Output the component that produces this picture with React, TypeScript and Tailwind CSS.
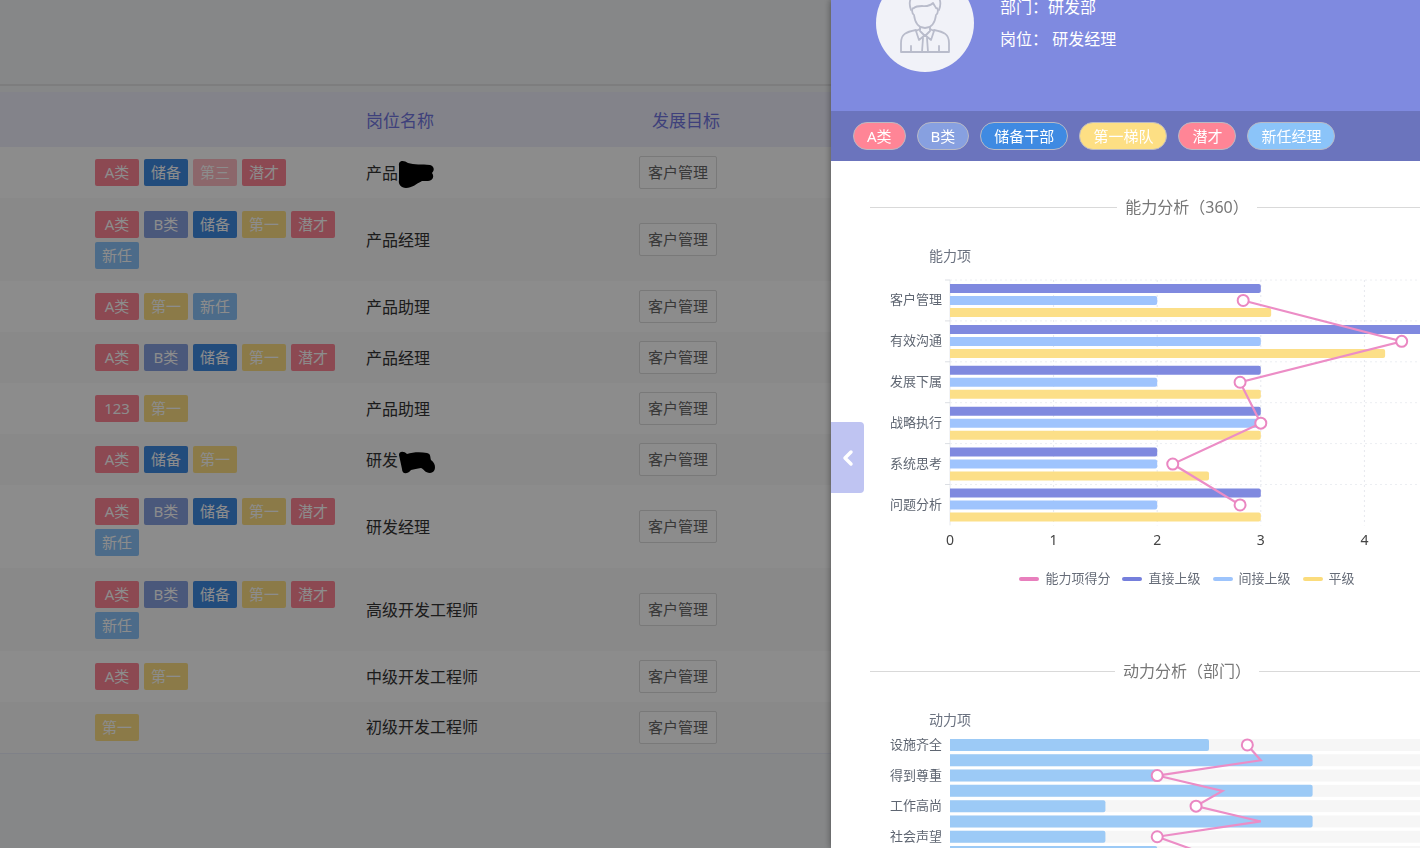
import { ChevronLeft } from 'lucide-react';
import clsx from 'clsx';

type Tone = 'rose' | 'indigo' | 'blue' | 'pale' | 'yellow' | 'sky';

interface Tag {
  text: string;
  tone: Tone;
}

const tones: Record<Tone, string> = {
  rose: 'bg-[#ff8596]',
  indigo: 'bg-[#87a0e0]',
  blue: 'bg-[#3f8ae2]',
  pale: 'bg-[#ffbcc3]',
  yellow: 'bg-[#fddf84]',
  sky: 'bg-[#8bc4f9]',
};

const A: Tag = { text: 'A类', tone: 'rose' };
const B: Tag = { text: 'B类', tone: 'indigo' };
const RESERVE: Tag = { text: '储备', tone: 'blue' };
const FIRST: Tag = { text: '第一', tone: 'yellow' };
const THIRD: Tag = { text: '第三', tone: 'pale' };
const TALENT: Tag = { text: '潜才', tone: 'rose' };
const NEW: Tag = { text: '新任', tone: 'sky' };
const ALL = [A, B, RESERVE, FIRST, TALENT, NEW];

interface Row {
  tags: Tag[];
  post: string;
  mask?: string;
}

const rows: Row[] = [
  {
    tags: [A, RESERVE, THIRD, TALENT],
    post: '产品',
    mask: 'M1 8C0 2 6 2 10 5C16 7 24 6 32 7C36 8 37 12 34 15C37 19 34 23 30 23H24C18 26 14 30 8 30C3 30 0 26 1 22Z',
  },
  { tags: ALL, post: '产品经理' },
  { tags: [A, FIRST, NEW], post: '产品助理' },
  { tags: [A, B, RESERVE, FIRST, TALENT], post: '产品经理' },
  { tags: [{ text: '123', tone: 'rose' }, FIRST], post: '产品助理' },
  {
    tags: [A, RESERVE, FIRST],
    post: '研发',
    mask: 'M1 10C1 6 6 6 9 9C15 7 23 7 29 8C33 9 32 12 33 15C39 19 38 28 32 28C27 28 26 24 23 23C19 24 16 24 13 25C9 30 4 29 4 24Z',
  },
  { tags: ALL, post: '研发经理' },
  { tags: ALL, post: '高级开发工程师' },
  { tags: [A, FIRST], post: '中级开发工程师' },
  { tags: [FIRST], post: '初级开发工程师' },
];

const profileTags: Tag[] = [
  A,
  B,
  { text: '储备干部', tone: 'blue' },
  { text: '第一梯队', tone: 'yellow' },
  TALENT,
  { text: '新任经理', tone: 'sky' },
];

const ability = [
  { name: '客户管理', direct: 3, indirect: 2, peer: 3.1, score: 2.83 },
  { name: '有效沟通', direct: 5, indirect: 3, peer: 4.2, score: 4.36 },
  { name: '发展下属', direct: 3, indirect: 2, peer: 3, score: 2.8 },
  { name: '战略执行', direct: 3, indirect: 3, peer: 3, score: 3 },
  { name: '系统思考', direct: 2, indirect: 2, peer: 2.5, score: 2.15 },
  { name: '问题分析', direct: 3, indirect: 2, peer: 3, score: 2.8 },
];

// Only every second category is labelled on the axis
const drive = [
  { name: '设施齐全', value: 2.5, score: 2.87 },
  { name: '', value: 3.5, score: 3 },
  { name: '得到尊重', value: 2, score: 2 },
  { name: '', value: 3.5, score: 2.63 },
  { name: '工作高尚', value: 1.5, score: 2.375 },
  { name: '', value: 3.5, score: 3 },
  { name: '社会声望', value: 1.5, score: 2 },
  { name: '', value: 2, score: 2.41 },
];

const legend = [
  { name: '能力项得分', color: 'bg-[#e87fbd]' },
  { name: '直接上级', color: 'bg-[#757fdc]' },
  { name: '间接上级', color: 'bg-[#9dc4fc]' },
  { name: '平级', color: 'bg-[#fbdc7c]' },
];

const ORIGIN = 80;
const UNIT = 103.6;
const x = (v: number) => ORIGIN + v * UNIT;

// Bar with a square left end and rounded right corners
const bar = (top: number, v: number, h: number) =>
  `M${ORIGIN} ${top}H${x(v) - 2}q2 0 2 2v${h - 4}q0 2 -2 2H${ORIGIN}Z`;

function SectionTitle({ children }: { children: string }) {
  return (
    <div className="flex h-6 items-center gap-2">
      <span className="h-px flex-1 bg-[#d9d9d9]" />
      <h2 className="text-base leading-6 text-[#777]">{children}</h2>
      <span className="h-px flex-1 bg-[#d9d9d9]" />
    </div>
  );
}

function AbilityChart() {
  const top = 61;
  const band = 40.9;
  const mid = (i: number) => top + band * (i + 0.5);

  return (
    <svg viewBox="0 0 634 348" className="block h-[348px] w-full" role="img" aria-label="能力分析">
      <text x={ORIGIN} y="42" textAnchor="middle" className="fill-[#6b7280] text-sm">能力项</text>
      {[0, 1, 2, 3, 4].map((v) => (
        <g key={v}>
          <line x1={x(v)} x2={x(v)} y1={top} y2={top + band * 6} stroke="#e6e8ee" strokeDasharray={v ? '2 3' : undefined} />
          <text x={x(v)} y="326" textAnchor="middle" className="fill-[#444] text-sm">{v}</text>
        </g>
      ))}
      {ability.map((d, i) => {
        const y = top + band * i;
        return (
          <g key={d.name}>
            <line x1={ORIGIN} x2={x(5)} y1={y} y2={y} stroke="#eceef2" strokeDasharray="2 3" />
            <line x1={ORIGIN - 5} x2={ORIGIN} y1={y} y2={y} stroke="#dcdfe4" />
            <text x="72" y={mid(i) + 4} textAnchor="end" className="fill-[#5f6672] text-[13px]">{d.name}</text>
            <path d={bar(y + 4, d.direct, 9)} fill="#7f89df" />
            <path d={bar(y + 16, d.indirect, 9)} fill="#9fc4fd" />
            <path d={bar(y + 28, d.peer, 9)} fill="#fcdf88" />
          </g>
        );
      })}
      <polyline
        points={ability.map((d, i) => `${x(d.score)},${mid(i)}`).join(' ')}
        fill="none"
        stroke="#ec8dc6"
        strokeWidth="2.2"
      />
      {ability.map((d, i) => (
        <circle key={d.name} cx={x(d.score)} cy={mid(i)} r="5.5" fill="#fff" stroke="#ea87c2" strokeWidth="2" />
      ))}
    </svg>
  );
}

function DriveChart() {
  const top = 54.3;
  const band = 15.3;
  const mid = (i: number) => top + band * (i + 0.5);

  return (
    <svg viewBox="0 0 634 200" className="block h-[200px] w-full" role="img" aria-label="动力分析">
      <text x={ORIGIN} y="42" textAnchor="middle" className="fill-[#6b7280] text-sm">动力项</text>
      {drive.map((d, i) => (
        <g key={i}>
          <rect x={ORIGIN} y={mid(i) - 6} width={UNIT * 5} height="12" fill="#f6f6f6" />
          <path d={bar(mid(i) - 6, d.value, 12)} fill="#9ccaf6" />
          <text x="72" y={mid(i) + 4} textAnchor="end" className="fill-[#5f6672] text-[13px]">{d.name}</text>
        </g>
      ))}
      <polyline
        points={drive.map((d, i) => `${x(d.score)},${mid(i)}`).join(' ')}
        fill="none"
        stroke="#ec8dc6"
        strokeWidth="2.2"
      />
      {drive.map((d, i) =>
        d.name ? (
          <circle key={i} cx={x(d.score)} cy={mid(i)} r="5.5" fill="#fff" stroke="#ea87c2" strokeWidth="2" />
        ) : null
      )}
    </svg>
  );
}

function Avatar() {
  return (
    <div className="flex size-[98px] shrink-0 items-end justify-center rounded-full bg-[#f1f2f8] pb-[19px]">
      <svg width="50" height="62" viewBox="0 0 50 62" fill="none" stroke="#b9bccb" strokeWidth="1.8" strokeLinejoin="round" strokeLinecap="round">
        <path d="M11 19C7 8 13 1 24 1c4-1 6 1 8 2 8 1 10 8 7 16" />
        <path d="M14 17c-3 0-2 6 0 7 1 8 5 13 11 13s10-5 11-13c2-1 3-7 0-7-1-2-2-3-3-5-4 4-8 3-11 3-3 0-6 0-8 2" />
        <path d="M20 36v4l5 5 5-5v-4" />
        <path d="M20 38l-4 2 3 9 6-5M30 38l4 2-3 9-6-5" />
        <path d="M16 39C6 41 1 43 1 52v9h48v-9c0-9-5-11-15-13" />
        <path d="M23 47l-1 14M27 47l1 14M11 55v6M39 55v6" />
      </svg>
    </div>
  );
}

function Drawer() {
  return (
    <aside className="fixed inset-y-0 right-0 w-[589px] bg-white shadow-[-1px_0_6px_rgba(0,0,0,0.35)]">
      <div className="h-full overflow-hidden">
        <div className="w-[712px]">
          <header className="flex h-[111px] items-end overflow-hidden bg-[#7f8ae0] pl-[45px]">
            <div className="flex items-end gap-[26px] pb-[39px]">
              <Avatar />
              <div className="pb-[17px] text-base leading-8 text-white">
                <p>部门：研发部</p>
                <p>岗位： 研发经理</p>
              </div>
            </div>
          </header>
          <ul className="flex h-[50px] items-center gap-[11px] bg-[#6b74bd] pl-[22px]">
            {profileTags.map((t) => (
              <li
                key={t.text}
                className={clsx('h-7 rounded-full border border-[#b9b9c4] px-[13px] text-[15px] leading-[26px] text-white', tones[t.tone])}
              >
                {t.text}
              </li>
            ))}
          </ul>

          <section className="px-[39px] pt-[34px]">
            <SectionTitle>能力分析（360）</SectionTitle>
            <AbilityChart />
            <ul className="flex h-6 items-center justify-center gap-3">
              {legend.map((l) => (
                <li key={l.name} className="flex items-center gap-[6px] text-[13px] text-[#666c78]">
                  <span className={clsx('h-1 w-5 rounded-xs', l.color)} />
                  {l.name}
                </li>
              ))}
            </ul>
          </section>

          <section className="px-[39px] pt-[68px]">
            <SectionTitle>动力分析（部门）</SectionTitle>
            <DriveChart />
          </section>
        </div>
      </div>
      <button
        type="button"
        aria-label="收起"
        className="absolute top-[422px] left-0 flex h-[71px] w-[33px] items-center justify-center rounded-r bg-[#bfc4f2] text-white"
      >
        <ChevronLeft size={24} strokeWidth={3.5} />
      </button>
    </aside>
  );
}

export default function App() {
  return (
    <div className="min-h-screen bg-[#f4f6f8] font-['Noto_Sans','Noto_Sans_CJK_SC',sans-serif]">
      <div className="h-[86px] border-b-2 border-[#e3e3e5]" />
      <table className="mt-[6px] w-full table-fixed border-b border-[#e8ebf8] text-left">
        <thead>
          <tr className="h-[55px] bg-[#eeeefc] text-[17px] text-[#7276e0]">
            <th className="w-[351px] p-0" />
            <th className="w-[273px] p-0 pt-[3px] pl-[15px] font-normal">岗位名称</th>
            <th className="p-0 pt-[3px] pl-7 font-normal">发展目标</th>
          </tr>
        </thead>
        <tbody>
          {rows.map((r, i) => (
            <tr
              key={i}
              className={clsx(r.tags.length > 5 ? 'h-[83px]' : 'h-[51px]', i % 2 ? 'bg-[#f9f9f9]' : 'bg-white')}
            >
              <td className="p-0 pr-[10px] pl-[95px]">
                <div className="flex flex-wrap gap-x-[5px] gap-y-1">
                  {r.tags.map((t) => (
                    <span
                      key={t.text}
                      className={clsx('h-[27px] w-11 rounded-xs text-center text-[15px] leading-[27px] text-white', tones[t.tone])}
                    >
                      {t.text}
                    </span>
                  ))}
                </div>
              </td>
              <td className="p-0 pl-[15px] text-base text-[#333]">
                <div className="flex items-center">
                  {r.post}
                  {r.mask && (
                    <svg width="37" height="30" viewBox="0 0 37 30" className="overflow-visible">
                      <path d={r.mask} fill="#000" />
                    </svg>
                  )}
                </div>
              </td>
              <td className="p-0 pl-[15px]">
                <button type="button" className="block h-[33px] w-[78px] rounded-xs border border-[#dcdcdc] bg-white text-[15px] text-[#666]">
                  客户管理
                </button>
              </td>
            </tr>
          ))}
        </tbody>
      </table>
      <div className="fixed inset-0 bg-black/45" />
      <Drawer />
    </div>
  );
}
